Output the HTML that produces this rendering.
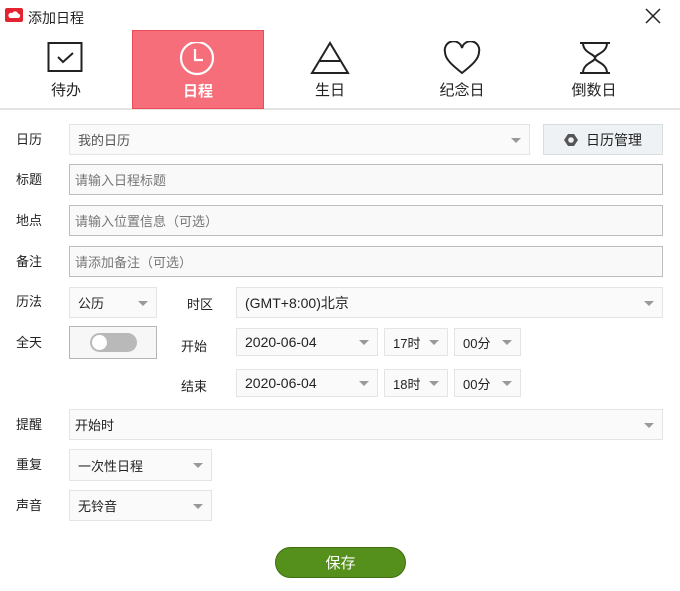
<!DOCTYPE html><html><head><meta charset="utf-8"><style>
*{box-sizing:border-box;margin:0;padding:0}
body{width:680px;height:591px;background:#fff;font-family:"Liberation Sans","Noto Sans CJK SC",sans-serif;font-size:13px;color:#222;position:relative;overflow:hidden}
.a{position:absolute}
.lbl{position:absolute;left:16px;font-size:13px;line-height:16px}
.inp{position:absolute;border:1px solid #bdbdbd;background:#f9f9f9;color:#777;padding-left:5px;display:flex;align-items:center}
.sel{position:absolute;border:1px solid #e4e4e4;background:#fafafa;color:#222;padding-left:8px;display:flex;align-items:center}
.sel:after{content:"";position:absolute;right:8px;top:50%;margin-top:-2px;border-left:5px solid transparent;border-right:5px solid transparent;border-top:5px solid #999}
.tab{position:absolute;top:30px;width:132px;height:79px;text-align:center;font-size:15px}
.tab svg{position:absolute;left:47px;top:11px}
.tab span{position:absolute;left:0;right:0;top:49px}
</style></head><body>
<svg class="a" style="left:5px;top:8px" width="18" height="14"><rect width="18" height="14" rx="2" fill="#e3232f"/><path d="M5 10h8a2.2 2.2 0 0 0 0-4.4 3 3 0 0 0-5.6-.6A2.5 2.5 0 0 0 5 10z" fill="#fff"/></svg>
<div class="a" style="left:28px;top:8px;font-size:14px">添加日程</div>
<svg class="a" style="left:645px;top:8px" width="16" height="16"><path d="M1 1L15 15M15 1L1 15" stroke="#222" stroke-width="1.5"/></svg>
<div class="a" style="left:0;top:108px;width:680px;height:2px;background:#e4e4e4"></div>
<div class="tab" style="left:0"><svg width="38" height="34"><rect x="1.5" y="2" width="33" height="28" fill="none" stroke="#222" stroke-width="2"/><path d="M11 16l5 5 10-9" fill="none" stroke="#222" stroke-width="2"/></svg><span>待办</span></div>
<div class="tab" style="left:132px;background:#f56e79;border:1px solid #ec4a57;color:#fff;font-weight:bold"><svg width="38" height="34" style="left:46px"><circle cx="18" cy="16" r="16" fill="none" stroke="#fff" stroke-width="2.2"/><path d="M16 7v11h8" fill="none" stroke="#fff" stroke-width="2.2"/></svg><span>日程</span></div>
<div class="tab" style="left:264px"><svg width="40" height="34" style="left:46px"><path d="M20 2L2 32h36z" fill="none" stroke="#222" stroke-width="2"/><path d="M10 20h20" stroke="#222" stroke-width="2"/></svg><span>生日</span></div>
<div class="tab" style="left:396px"><svg width="40" height="34" style="left:46px"><path d="M20 32C10 24 3 18 3 11a8 8 0 0 1 17-4 8 8 0 0 1 17 4c0 7-7 13-17 21z" fill="none" stroke="#222" stroke-width="2"/></svg><span>纪念日</span></div>
<div class="tab" style="left:528px"><svg width="40" height="34" style="left:50px"><path d="M2 2h30M2 32h30M5 2c0 10 12 11 12 15S5 22 5 32M29 2c0 10-12 11-12 15s12 5 12 15" fill="none" stroke="#222" stroke-width="2"/></svg><span>倒数日</span></div>

<div class="lbl" style="top:132px">日历</div>
<div class="sel" style="left:69px;top:124px;width:461px;height:31px;color:#555">我的日历</div>
<div class="a" style="left:543px;top:124px;width:120px;height:31px;border:1px solid #d8dde0;background:#eef2f4;display:flex;align-items:center;justify-content:center;font-size:14px"><svg width="14" height="14" style="margin-right:8px"><path d="M4 1h6l4 6-4 6H4L0 7z" fill="#555"/><circle cx="7" cy="7" r="2.8" fill="#eef2f4"/></svg>日历管理</div>
<div class="lbl" style="top:172px">标题</div>
<div class="inp" style="left:69px;top:164px;width:594px;height:31px">请输入日程标题</div>
<div class="lbl" style="top:213px">地点</div>
<div class="inp" style="left:69px;top:205px;width:594px;height:31px">请输入位置信息（可选）</div>
<div class="lbl" style="top:254px">备注</div>
<div class="inp" style="left:69px;top:246px;width:594px;height:31px">请添加备注（可选）</div>

<div class="lbl" style="top:294px">历法</div>
<div class="sel" style="left:69px;top:287px;width:88px;height:31px">公历</div>
<div class="a" style="left:187px;top:294px">时区</div>
<div class="sel" style="left:236px;top:287px;width:427px;height:31px;font-size:14px">(GMT+8:00)北京</div>
<div class="lbl" style="top:335px">全天</div>
<div class="a" style="left:69px;top:326px;width:88px;height:33px;border:1px solid #b5b5b5;background:#f7f7f7"><div class="a" style="left:20px;top:6px;width:47px;height:19px;border-radius:10px;background:#b9b9b9"></div><div class="a" style="left:22px;top:8px;width:15px;height:15px;border-radius:50%;background:#fff"></div></div>
<div class="a" style="left:181px;top:336px">开始</div>
<div class="sel" style="left:236px;top:328px;width:142px;height:28px;font-size:14px">2020-06-04</div>
<div class="sel" style="left:384px;top:328px;width:64px;height:28px">17时</div>
<div class="sel" style="left:454px;top:328px;width:67px;height:28px">00分</div>
<div class="a" style="left:181px;top:376px">结束</div>
<div class="sel" style="left:236px;top:369px;width:142px;height:28px;font-size:14px">2020-06-04</div>
<div class="sel" style="left:384px;top:369px;width:64px;height:28px">18时</div>
<div class="sel" style="left:454px;top:369px;width:67px;height:28px">00分</div>

<div class="lbl" style="top:417px">提醒</div>
<div class="sel" style="left:69px;top:409px;width:594px;height:31px;padding-left:5px">开始时</div>
<div class="lbl" style="top:457px">重复</div>
<div class="sel" style="left:69px;top:449px;width:143px;height:32px">一次性日程</div>
<div class="lbl" style="top:498px">声音</div>
<div class="sel" style="left:69px;top:490px;width:143px;height:31px">无铃音</div>
<div class="a" style="left:275px;top:547px;width:131px;height:31px;border-radius:16px;background:#558f1c;border:1px solid #3f7010;color:#fff;font-size:15px;display:flex;align-items:center;justify-content:center">保存</div>
</body></html>
